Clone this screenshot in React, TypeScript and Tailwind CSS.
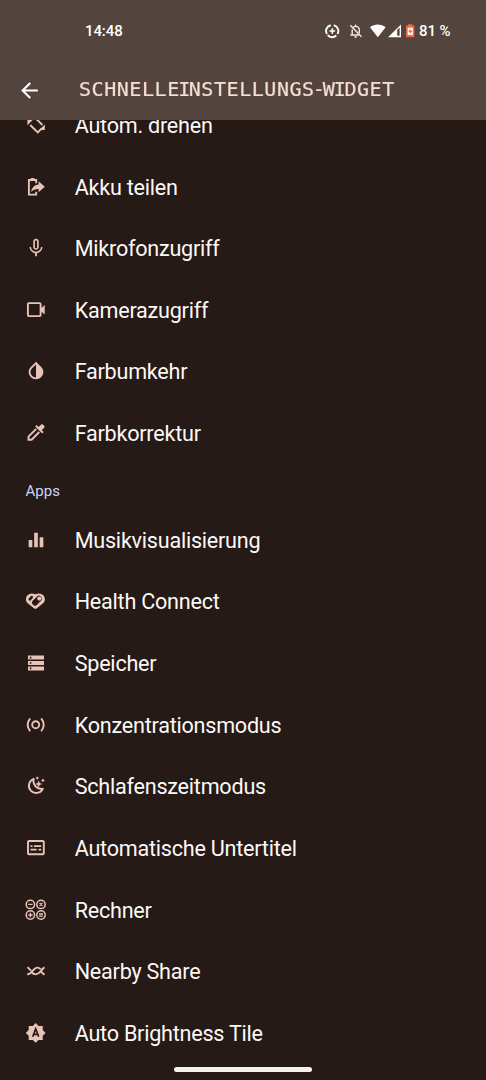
import type { ReactNode } from "react";
import {
  MdArrowBack,
  MdEqualizer,
  MdInvertColors,
  MdMicNone,
} from "react-icons/md";

type Tile = {
  label: string;
  icon: ReactNode;
};

const Glyph = ({ children }: { children: ReactNode }) => (
  <svg
    viewBox="0 0 22 22"
    className="h-[22px] w-[22px]"
    fill="none"
    stroke="currentColor"
    strokeWidth="1.9"
  >
    {children}
  </svg>
);

const RotateIcon = () => (
  <Glyph>
    <path d="M5.2 11l7.6 7.4 4-4M9.4 3.4l3.2 2.8 4.8 4.8" />
    <path d="M2.4 5.8h5.4L2.4 11.2zM19.8 10.4v5.6h-5.6z" fill="currentColor" stroke="none" />
  </Glyph>
);

const BatteryShareIcon = () => (
  <Glyph>
    <path d="M11.2 7.2V4H3.9v14.6h7.3v-2.8" />
    <path
      d="M5.8 2h3.6v2H5.8zM13.6 5.3l6.2 5.5-6.2 5.4v-3.3c-3.4-.1-5.6.8-7.5 3.2.5-3.8 2.9-7.2 7.5-7.6z"
      fill="currentColor"
      stroke="none"
    />
  </Glyph>
);

const CameraIcon = () => (
  <Glyph>
    <rect x="2.9" y="4.1" width="12.7" height="13" rx="1" />
    <path d="M15.8 9.6L19.7 6v9.6l-3.9-3.6z" fill="currentColor" stroke="none" />
  </Glyph>
);

const PipetteIcon = () => (
  <Glyph>
    <path d="M11.2 6.9l-7.7 7.7v3.1h3.1l7.7-7.7" />
    <path
      d="M10.2 4.5l1.5-1.4 1.9 1.9 2.6-2.5c.5-.5 1.2-.5 1.7 0l1.4 1.4c.5.5.5 1.2 0 1.7l-2.5 2.6 1.9 1.9-1.5 1.4z"
      fill="currentColor"
      stroke="none"
    />
  </Glyph>
);

const HealthIcon = () => (
  <Glyph>
    <path
      d="M10.4 16.3L4.5 11.6A3.2 3.2 0 0 1 6 6c1.800-.3 3.200.3 4.400 1.400C11.600 6.300 13 5.700 14.800 6a3.200 3.200 0 0 1 1.500 5.600z"
      fill="currentColor"
      strokeWidth="4.800"
      strokeLinejoin="round"
    />
    <path d="M4.800 9.300l1.900-2.200" stroke="#251a15" strokeWidth="2.600" strokeLinecap="round" />
    <path d="M10 12.600l3.900-3.900" stroke="#251a15" strokeWidth="5.800" strokeLinecap="round" />
    <circle cx="14.300" cy="8.600" r="2.100" fill="currentColor" stroke="none" />
  </Glyph>
);

const StorageIcon = () => (
  <Glyph>
    <path d="M3 3.6h16v4H3zM3 9h16v4H3zM3 14.4h16v4H3z" fill="currentColor" stroke="none" />
    <path d="M4.8 4.8h1.6v1.6H4.8zM4.8 10.2h1.6v1.6H4.8zM4.8 15.6h1.6v1.6H4.8z" fill="#251a15" stroke="none" />
  </Glyph>
);

const FocusIcon = () => (
  <Glyph>
    <circle cx="10.7" cy="10.7" r="3.5" />
    <path d="M5.2 4.3c-3.1 3.9-3.1 8.9 0 12.8M16.2 4.3c3.1 3.9 3.1 8.9 0 12.8" />
  </Glyph>
);

const BedtimeIcon = () => (
  <Glyph>
    <path d="M8.8 3.8a7.3 7.3 0 1 0 9 10A8 8 0 0 1 8.8 3.8z" strokeLinejoin="round" />
    <path
      d="M13.7 5.5l1 2.5 2.5 1-2.5 1-1 2.500-1-2.500-2.500-1 2.500-1zM12.300 1.600l1.500 1.500-1.500 1.500-1.500-1.500zM17.900 3.700l1.700 1.700-1.700 1.700-1.700-1.700z"
      fill="currentColor"
      stroke="none"
    />
  </Glyph>
);

const CaptionIcon = () => (
  <Glyph>
    <rect x="3" y="4" width="15.8" height="13.2" rx="1" />
    <path d="M5.5 9.2h2M9 9.2h7.2M5.5 12.7h6.2M13.5 12.7h2.7" strokeWidth="1.7" />
  </Glyph>
);

const CalculatorIcon = () => (
  <Glyph>
    <g strokeWidth="1.5">
      <circle cx="5.4" cy="5.4" r="4.2" />
      <circle cx="16" cy="5.4" r="4.2" />
      <circle cx="5.4" cy="16" r="4.2" />
      <circle cx="16" cy="16" r="4.2" />
      <path
        d="M3.2 5.4h4.4M14.5 3.9l3 3M17.5 3.9l-3 3M3.2 16h4.4M5.4 13.8v4.4M14 15h4M14 17.2h4"
        strokeWidth="1.3"
      />
    </g>
  </Glyph>
);

const NearbyIcon = () => (
  <Glyph>
    <path d="M2.2 14.3c1.800.2 2.800-.7 4-2 3-3.300 5.700-6.800 9.500-3.100M15.400 11.300l4.100 3.400M2.500 7.200l3.500 3.500M6.200 12c3.200 3.300 6.100 3 9.200-.3 1.200-1.300 2.300-3.800 4.200-4.200" />
  </Glyph>
);

const BrightnessIcon = () => (
  <Glyph>
    <path
      d="M10.7 1l2.9 2.9h4.1v4.1l2.9 2.9-2.9 2.9v4.1h-4.1l-2.9 2.9-2.9-2.9H3.7v-4.1L.8 10.9 3.7 8V3.9h4.1z"
      fill="currentColor"
      stroke="none"
    />
    <path d="M7.7 14.8l3-8 3 8M8.7 12.3h4" stroke="#251a15" strokeWidth="1.7" />
  </Glyph>
);

const systemTiles: Tile[] = [
  { label: "Autom. drehen", icon: <RotateIcon /> },
  { label: "Akku teilen", icon: <BatteryShareIcon /> },
  { label: "Mikrofonzugriff", icon: <MdMicNone size={22} /> },
  { label: "Kamerazugriff", icon: <CameraIcon /> },
  { label: "Farbumkehr", icon: <MdInvertColors size={22} /> },
  { label: "Farbkorrektur", icon: <PipetteIcon /> },
];

const appTiles: Tile[] = [
  { label: "Musikvisualisierung", icon: <MdEqualizer size={22} /> },
  { label: "Health Connect", icon: <HealthIcon /> },
  { label: "Speicher", icon: <StorageIcon /> },
  { label: "Konzentrationsmodus", icon: <FocusIcon /> },
  { label: "Schlafenszeitmodus", icon: <BedtimeIcon /> },
  { label: "Automatische Untertitel", icon: <CaptionIcon /> },
  { label: "Rechner", icon: <CalculatorIcon /> },
  { label: "Nearby Share", icon: <NearbyIcon /> },
  { label: "Auto Brightness Tile", icon: <BrightnessIcon /> },
];

const TileList = ({ tiles }: { tiles: Tile[] }) => (
  <ul>
    {tiles.map((tile) => (
      <li key={tile.label} className="flex h-[61.65px] items-center pl-[25px]">
        <span className="mb-px w-[49.7px] shrink-0 text-[#e8c4b8]">{tile.icon}</span>
        <span className="whitespace-nowrap pt-px text-[21.6px] leading-7 tracking-[-0.24px] text-[#fbf8f7]">
          {tile.label}
        </span>
      </li>
    ))}
  </ul>
);

const StatusIcons = () => (
  <svg viewBox="0 0 92 16" className="h-4 w-[92px]" fill="none">
    <g stroke="#fff" strokeWidth="1.9">
      <path d="M8.8 2.3a5.8 5.8 0 0 1 3.6 8.8M11.3 12.5a5.8 5.8 0 0 1-8.6-.3M2 11.1a5.8 5.8 0 0 1 3.8-8.8" />
      <path d="M4.5 8h5.6M7.3 5.2v5.6" strokeWidth="1.6" />
    </g>
    <g stroke="#f1ece9" strokeWidth="1.4">
      <path d="M28 4.6c.8-.8 1.6-1.2 2.6-1.2 2.3 0 3.7 1.7 3.7 3.9v3M27.2 6.5v5.2M25.3 12h8.8M30.6 1.5v2M29.4 14h2.4" />
      <path d="M25.3 2.2l11.2 11.6" />
    </g>
    <path d="M45 4.3C49.5.6 56 .6 60.6 4.3L52.8 14.3z" fill="#fff" />
    <path d="M76 1.4V14.3H63z" fill="#fff" />
    <path d="M72.200 6.800l2.400-2.400v8.400h-2.400z" fill="#53443d" />
    <path d="M83.2 1.2h4v1.4h2.2v11.700h-8.300V2.600h2.100z" fill="#f4683f" />
    <path d="M82.7 4.700h5.100v7.300h-5.100z" fill="#fff" />
    <path d="M83.500 8.400h3.600M85.300 6.600v3.600" stroke="#f4683f" strokeWidth="1.300" />
  </svg>
);

const App = () => {
  return (
    <div className="flex h-[1080px] w-[486px] flex-col overflow-hidden bg-[#251a15] font-['Roboto',sans-serif]">
      <header className="h-[120px] shrink-0 bg-[#53443d]">
        <div className="flex h-[62px] items-center pl-[85px] text-[15px] font-medium tracking-[-0.1px] text-white">
          <span className="w-[240px] pt-px">14:48</span>
          <StatusIcons />
          <span className="ml-[2px] whitespace-nowrap pt-px">81 %</span>
        </div>
        <div className="flex h-[56px] items-center pl-[17px]">
          <MdArrowBack size={25} className="text-white" />
          <h1 className="mb-[2px] ml-[37px] whitespace-nowrap bg-[radial-gradient(circle,#ffeae1_40%,#c4aea4_100%)] bg-[size:2px_2px] bg-clip-text font-['DejaVu_Sans_Mono',monospace] text-[20px] tracking-[0.55px] text-transparent [-webkit-text-stroke:0.2px_#e6cfc5]">
            SCHNELLE<span className="-ml-[1.5px] tracking-[-1.5px]">I</span>NSTELLUNGS
            <span className="-ml-[2px] tracking-[-2px]">-</span>W
            <span className="-ml-[1.5px] tracking-[-1.5px]">I</span>DGET
          </h1>
        </div>
      </header>

      <main className="min-h-0 flex-1 overflow-hidden">
        <div className="-mt-[25.4px]">
          <TileList tiles={systemTiles} />
          <h2 className="flex h-[45px] items-center pl-[25.5px] pt-[9px] text-[15px] text-[#cbd4fa]">
            Apps
          </h2>
          <TileList tiles={appTiles} />
        </div>
      </main>

      <footer className="-mt-4 flex h-4 shrink-0 justify-center">
        <div className="mt-[3px] h-[5px] w-[138px] rounded-full bg-[#f4f2f1]" />
      </footer>
    </div>
  );
};

export default App;
